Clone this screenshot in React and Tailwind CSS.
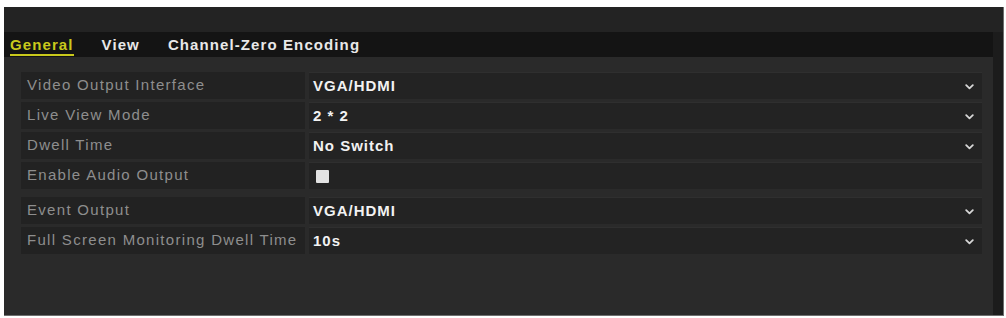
import React from "react";

const groups = [
  [
    { label: "Video Output Interface", value: "VGA/HDMI", select: true },
    { label: "Live View Mode", value: "2 * 2", select: true },
    { label: "Dwell Time", value: "No Switch", select: true },
    { label: "Enable Audio Output", checkbox: true },
  ],
  [
    { label: "Event Output", value: "VGA/HDMI", select: true },
    { label: "Full Screen Monitoring Dwell Time", value: "10s", select: true },
  ],
];

const tabs = ["General", "View", "Channel-Zero Encoding"];

const Chevron = () => (
  <svg width="9" height="6" viewBox="0 0 9 6" className="mr-[8px] mt-[2px]">
    <path d="M1.2 1.2 L4.5 4.4 L7.8 1.2" fill="none" stroke="#d6d6d6" strokeWidth="1.8" strokeLinecap="round" strokeLinejoin="round" />
  </svg>
);

const Row = ({ row }) => (
  <div className="flex h-[27px] gap-[4px]">
    <div className="w-[284px] bg-[#222222] flex items-center pl-[6px] text-[15px] tracking-[1.3px] text-[#8e8e8e] whitespace-nowrap overflow-hidden">
      {row.label}
    </div>
    <div className="flex-1 bg-[#232323] border-t border-[#2f2f2f] flex items-center justify-between pl-[4px]">
      {row.checkbox ? (
        <div className="w-[13px] h-[13px] bg-[#e2e2e2] rounded-[1px] ml-[3px]" />
      ) : (
        <span className="text-[15px] font-bold tracking-[1px] text-[#f2f2f2]">{row.value}</span>
      )}
      {row.select && <Chevron />}
    </div>
  </div>
);

export default function App() {
  return (
    <div className="w-[1006px] h-[318px] bg-white pt-[7px] pl-[4px] font-['Liberation_Sans',Arial,sans-serif]">
      <div className="w-[1000px] h-[309px] bg-[#232323] flex flex-col border-r border-b border-[#6e6e6e]">
        <div className="h-[25px]" />
        <div className="flex flex-1">
          <div className="flex-1 flex flex-col">
            <div className="h-[25px] bg-[#141414] flex pl-[6px] pt-[4px] gap-[28px]">
              {tabs.map((t, i) => (
                <div
                  key={t}
                  className={`h-[20px] leading-[18px] text-[15px] font-bold tracking-[1.1px] border-b-2 ${
                    i === 0 ? "text-[#c9c91c] border-[#c9c91c]" : "text-[#e8e8e8] border-transparent"
                  }`}
                >
                  {t}
                </div>
              ))}
            </div>
            <div className="flex-1 bg-[#2a2a2a] pt-[15px] pl-[17px] pr-[11px] flex flex-col gap-[8px]">
              {groups.map((g, gi) => (
                <div key={gi} className="flex flex-col gap-[3px]">
                  {g.map((row) => (
                    <Row key={row.label} row={row} />
                  ))}
                </div>
              ))}
            </div>
          </div>
          <div className="w-[10px] bg-[#1c1c1c]" />
        </div>
      </div>
    </div>
  );
}
